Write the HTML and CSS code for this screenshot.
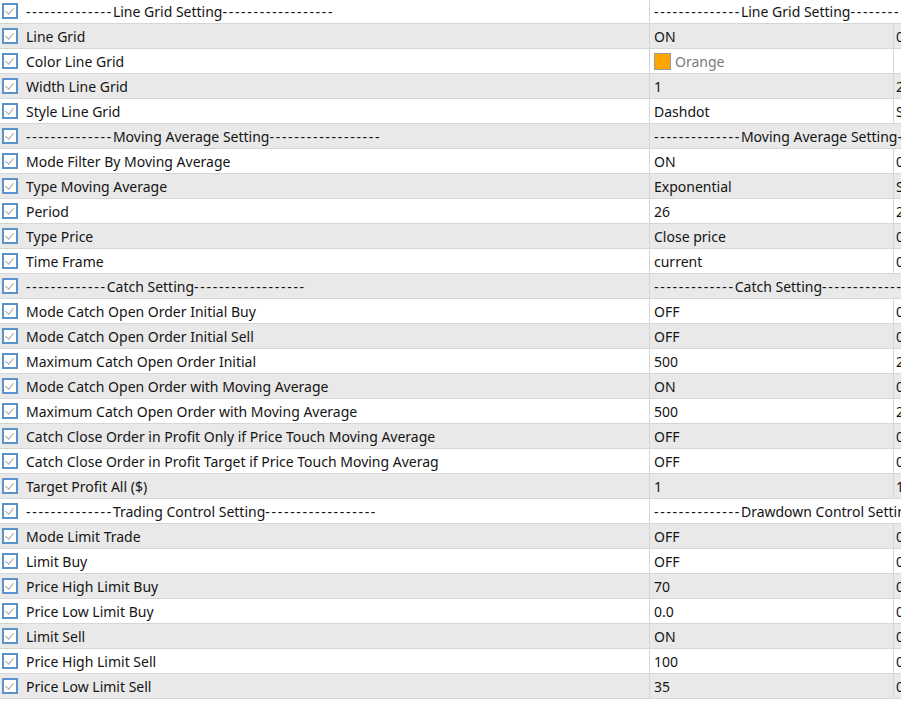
FILE: index.html
```html
<!DOCTYPE html>
<html lang="en">
  <head>
    <meta charset="UTF-8">
    <title>Inputs</title>
    <link rel="stylesheet" href="styles.css">
  </head>
  <body>
    <div class="inputs">
      <div class="row head">
        <div class="name"><span class="check"></span><span class="dash">--------------</span>Line Grid Setting<span class="dash">------------------</span></div>
        <div class="value"><span class="dash">--------------</span>Line Grid Setting<span class="dash">------------------</span></div>
      </div>
      <div class="row">
        <div class="name"><span class="check"></span>Line Grid</div>
        <div class="value">ON</div>
        <div class="start">0</div>
      </div>
      <div class="row">
        <div class="name"><span class="check"></span>Color Line Grid</div>
        <div class="value"><span class="swatch"></span><span class="muted">Orange</span></div>
        <div class="start"></div>
      </div>
      <div class="row">
        <div class="name"><span class="check"></span>Width Line Grid</div>
        <div class="value">1</div>
        <div class="start">2</div>
      </div>
      <div class="row">
        <div class="name"><span class="check"></span>Style Line Grid</div>
        <div class="value">Dashdot</div>
        <div class="start">S</div>
      </div>
      <div class="row head">
        <div class="name"><span class="check"></span><span class="dash">--------------</span>Moving Average Setting<span class="dash">------------------</span></div>
        <div class="value"><span class="dash">--------------</span>Moving Average Setting<span class="dash">------------------</span></div>
      </div>
      <div class="row">
        <div class="name"><span class="check"></span>Mode Filter By Moving Average</div>
        <div class="value">ON</div>
        <div class="start">0</div>
      </div>
      <div class="row">
        <div class="name"><span class="check"></span>Type Moving Average</div>
        <div class="value">Exponential</div>
        <div class="start">S</div>
      </div>
      <div class="row">
        <div class="name"><span class="check"></span>Period</div>
        <div class="value">26</div>
        <div class="start">2</div>
      </div>
      <div class="row">
        <div class="name"><span class="check"></span>Type Price</div>
        <div class="value">Close price</div>
        <div class="start">0</div>
      </div>
      <div class="row">
        <div class="name"><span class="check"></span>Time Frame</div>
        <div class="value">current</div>
        <div class="start">0</div>
      </div>
      <div class="row head">
        <div class="name"><span class="check"></span><span class="dash">-------------</span>Catch Setting<span class="dash">------------------</span></div>
        <div class="value"><span class="dash">-------------</span>Catch Setting<span class="dash">------------------</span></div>
      </div>
      <div class="row">
        <div class="name"><span class="check"></span>Mode Catch Open Order Initial Buy</div>
        <div class="value">OFF</div>
        <div class="start">0</div>
      </div>
      <div class="row">
        <div class="name"><span class="check"></span>Mode Catch Open Order Initial Sell</div>
        <div class="value">OFF</div>
        <div class="start">0</div>
      </div>
      <div class="row">
        <div class="name"><span class="check"></span>Maximum Catch Open Order Initial</div>
        <div class="value">500</div>
        <div class="start">2</div>
      </div>
      <div class="row">
        <div class="name"><span class="check"></span>Mode Catch Open Order with Moving Average</div>
        <div class="value">ON</div>
        <div class="start">0</div>
      </div>
      <div class="row">
        <div class="name"><span class="check"></span>Maximum Catch Open Order with Moving Average</div>
        <div class="value">500</div>
        <div class="start">2</div>
      </div>
      <div class="row">
        <div class="name"><span class="check"></span>Catch Close Order in Profit Only if Price Touch Moving Average</div>
        <div class="value">OFF</div>
        <div class="start">0</div>
      </div>
      <div class="row">
        <div class="name"><span class="check"></span>Catch Close Order in Profit Target if Price Touch Moving Averag</div>
        <div class="value">OFF</div>
        <div class="start">0</div>
      </div>
      <div class="row">
        <div class="name"><span class="check"></span>Target Profit All ($)</div>
        <div class="value">1</div>
        <div class="start">1</div>
      </div>
      <div class="row head">
        <div class="name"><span class="check"></span><span class="dash">--------------</span>Trading Control Setting<span class="dash">------------------</span></div>
        <div class="value"><span class="dash">--------------</span>Drawdown Control Setting<span class="dash">------------------</span></div>
      </div>
      <div class="row">
        <div class="name"><span class="check"></span>Mode Limit Trade</div>
        <div class="value">OFF</div>
        <div class="start">0</div>
      </div>
      <div class="row">
        <div class="name"><span class="check"></span>Limit Buy</div>
        <div class="value">OFF</div>
        <div class="start">0</div>
      </div>
      <div class="row">
        <div class="name"><span class="check"></span>Price High Limit Buy</div>
        <div class="value">70</div>
        <div class="start">0</div>
      </div>
      <div class="row">
        <div class="name"><span class="check"></span>Price Low Limit Buy</div>
        <div class="value">0.0</div>
        <div class="start">0</div>
      </div>
      <div class="row">
        <div class="name"><span class="check"></span>Limit Sell</div>
        <div class="value">ON</div>
        <div class="start">0</div>
      </div>
      <div class="row">
        <div class="name"><span class="check"></span>Price High Limit Sell</div>
        <div class="value">100</div>
        <div class="start">0</div>
      </div>
      <div class="row">
        <div class="name"><span class="check"></span>Price Low Limit Sell</div>
        <div class="value">35</div>
        <div class="start">0</div>
      </div>
    </div>
  </body>
</html>
```

FILE: styles.css
```css
body {
  margin: 0;
  overflow: hidden;
  background: #ffffff;
  font-family: "Noto Sans", "Open Sans", sans-serif;
  font-size: 14px;
  color: #141414;
}

.inputs {
  margin-top: -1px;
  width: 901px;
}

.row {
  display: grid;
  grid-template-columns: 650px 244px 1fr;
  height: 25px;
  box-sizing: border-box;
  border-bottom: 1px solid #d6d6d6;
  background: #ffffff;
}

.row:nth-child(even) {
  background: #e9e9e9;
}

.row.head {
  grid-template-columns: 650px 1fr;
}

.name, .value, .start {
  display: flex;
  align-items: center;
  white-space: nowrap;
  overflow: hidden;
}

.name {
  border-right: 1px solid #d6d6d6;
}

.value {
  padding-left: 4px;
}

.row:not(.head) .value {
  border-right: 1px solid #d6d6d6;
}

.start {
  padding-left: 2px;
}

.dash {
  letter-spacing: 1.7px;
}

.check {
  width: 12px;
  height: 12px;
  margin: 0 8px 0 2px;
  border: 2px solid #5a93c9;
  background: #ffffff;
  position: relative;
  flex: none;
}

.check::after {
  content: "";
  position: absolute;
  left: 3px;
  top: 1px;
  width: 4px;
  height: 7px;
  border: solid #a6a6a6;
  border-width: 0 1px 1px 0;
  transform: rotate(40deg);
}

.swatch {
  width: 15px;
  height: 15px;
  margin-right: 4px;
  border: 1px solid #9a9a9a;
  background: #ffa500;
}

.muted {
  color: #7a7a7a;
}
```
